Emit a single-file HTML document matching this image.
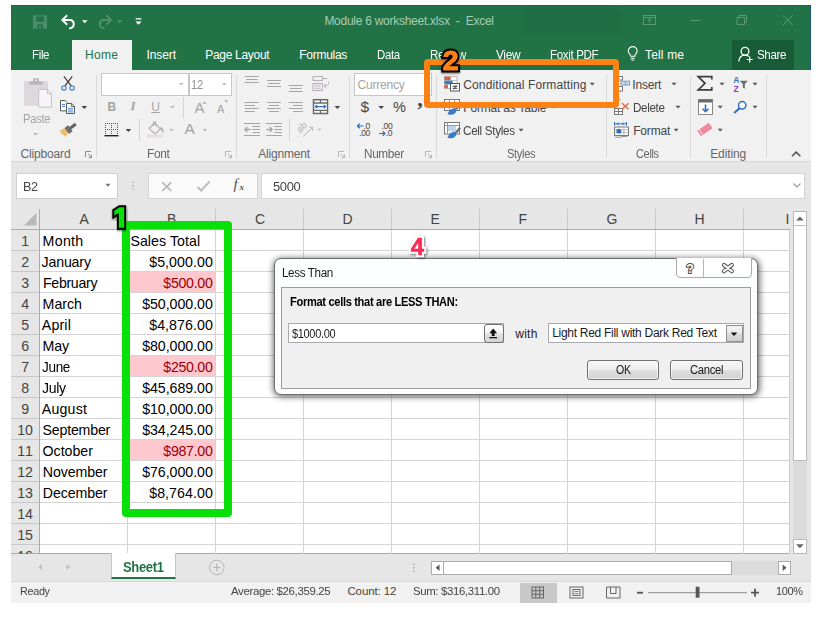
<!DOCTYPE html>
<html lang="en">
<head>
<meta charset="utf-8">
<title>Module 6 worksheet.xlsx - Excel</title>
<style>
html,body{margin:0;padding:0;background:#fff;}
body{width:838px;height:619px;position:relative;overflow:hidden;font-family:"Liberation Sans",sans-serif;}
.a{position:absolute;box-sizing:border-box;}
.t{position:absolute;white-space:nowrap;line-height:1;margin:0;padding:0;}
#titlebar{left:11px;top:5px;width:800px;height:65px;background:#217346;}
#hometab{left:72px;top:40px;width:60px;height:31px;background:#f1f1f1;}
#sharebg{left:732px;top:40px;width:62px;height:30px;background:#185c37;}
#ribbon{left:11px;top:70px;width:800px;height:92px;background:#f1f1f1;border-bottom:1px solid #d6d6d6;}
#fbar{left:11px;top:162px;width:800px;height:47px;background:#e6e6e6;}
#sheet{left:11px;top:209px;width:800px;height:345px;background:#e6e6e6;}
#grid{left:40px;top:230px;width:750px;height:324px;background:#fff;}
#tabbar{left:11px;top:554px;width:800px;height:28px;background:#e6e6e6;}
#status{left:11px;top:581px;width:800px;height:22px;background:#f1f1f1;border-top:1px solid #d9d9d9;}
.box{background:#fff;border:1px solid #c6c6c6;}
.num{font-weight:bold;}
.num::after{position:absolute;left:0;top:0;}
#n2{left:442.700px;top:46.300px;font-size:28.500px;-webkit-text-stroke:5px #000;color:#000;filter:drop-shadow(0 1px 1.200px rgba(0,0,0,.55));}
#n2::after{content:"2";-webkit-text-stroke:1px #fd8114;color:#fd8114;}
#n1{left:113.280px;top:204.190px;font-size:27.300px;-webkit-text-stroke:5.600px #000;color:#000;filter:drop-shadow(0.500px 1px 1.200px rgba(0,0,0,.55));clip-path:polygon(-6px -6px,26px -6px,26px 16.810px,12.920px 16.810px,12.920px 29px,3.570px 29px,3.570px 16.810px,-6px 16.810px);}
#n1::after{content:"1";-webkit-text-stroke:1.600px #08e008;color:#08e008;clip-path:polygon(-6px -6px,26px -6px,26px 18.810px,10.920px 18.810px,10.920px 30px,5.570px 30px,5.570px 18.810px,-6px 18.810px);}
#n4{left:410.700px;top:235.100px;font-size:24px;-webkit-text-stroke:4.500px #fff;color:#fff;filter:drop-shadow(1.500px 1.500px 1.300px rgba(0,0,0,.5));}
#n4::after{content:"4";-webkit-text-stroke:0.600px #fb2b55;color:#fb2b55;}
.vsep{width:1px;background:#d4d4d4;}
.gsep{width:1px;background:#dadada;top:75px;height:83px;}
.hl{height:1px;background:#d4d4d4;left:40px;width:750px;}
.vl{width:1px;background:#d4d4d4;top:230px;height:324px;}
.rh{height:1px;background:#c8c8c8;left:11px;width:28px;}
.ch{width:1px;background:#c8c8c8;top:209px;height:20px;}
.pink{background:#ffc7ce;left:128px;width:87px;height:20px;}
</style>
</head>
<body>
<div class="a" id="titlebar"></div>
<div class="a" style="left:524px;top:8px;width:98px;height:27px;background:rgba(0,0,0,.035);filter:blur(2.500px);"></div>
<div class="a" style="left:810px;top:5px;width:1px;height:65px;background:#1d5379;"></div>
<div class="a" style="left:11px;top:5px;width:799px;height:1px;background:#1c6b3f;"></div>
<div class="a" id="hometab"></div>
<div class="a" id="sharebg"></div>
<div class="a" id="ribbon"></div>
<div class="a" id="fbar"></div>
<div class="a" id="sheet"></div>
<div class="a" id="grid"></div>
<div class="a" id="tabbar"></div>
<div class="a" style="left:11px;top:553px;width:779px;height:1px;background:#ababab;"></div>
<div class="a" id="status"></div>
<div class="a gsep" style="left:96px"></div>
<div class="a gsep" style="left:236px"></div>
<div class="a gsep" style="left:349px"></div>
<div class="a gsep" style="left:436px"></div>
<div class="a gsep" style="left:606px"></div>
<div class="a gsep" style="left:690px"></div>
<div class="a gsep" style="left:766px"></div>
<div class="a box" style="left:101px;top:73px;width:88px;height:23px;"></div>
<div class="a box" style="left:189px;top:73px;width:43px;height:23px;border-left:1px solid #c6c6c6;"></div>
<div class="a box" style="left:354px;top:73px;width:78px;height:23px;"></div>
<div class="a vsep" style="left:183px;top:97px;width:1px;height:21px;"></div>
<div class="a vsep" style="left:139px;top:119px;width:1px;height:22px;"></div>
<div class="a vsep" style="left:289px;top:119px;width:1px;height:22px;"></div>
<div class="a box" style="left:16px;top:173px;width:102px;height:26px;border-color:#cfcfcf;"></div>
<div class="a box" style="left:148px;top:173px;width:110px;height:26px;border-color:#d4d4d4;background:#fafafa;"></div>
<div class="a box" style="left:261px;top:173px;width:544px;height:26px;border-color:#d4d4d4;"></div>
<div class="a" style="left:11px;top:229px;width:779px;height:1px;background:#ababab;"></div>
<div class="a" style="left:39px;top:209px;width:1px;height:345px;background:#ababab;"></div>
<div class="a ch" style="left:127px"></div>
<div class="a vl" style="left:127px"></div>
<div class="a ch" style="left:215px"></div>
<div class="a vl" style="left:215px"></div>
<div class="a ch" style="left:303px"></div>
<div class="a vl" style="left:303px"></div>
<div class="a ch" style="left:391px"></div>
<div class="a vl" style="left:391px"></div>
<div class="a ch" style="left:479px"></div>
<div class="a vl" style="left:479px"></div>
<div class="a ch" style="left:567px"></div>
<div class="a vl" style="left:567px"></div>
<div class="a ch" style="left:655px"></div>
<div class="a vl" style="left:655px"></div>
<div class="a ch" style="left:743px"></div>
<div class="a vl" style="left:743px"></div>
<div class="a hl" style="top:250px"></div>
<div class="a rh" style="top:250px"></div>
<div class="a hl" style="top:271px"></div>
<div class="a rh" style="top:271px"></div>
<div class="a hl" style="top:292px"></div>
<div class="a rh" style="top:292px"></div>
<div class="a hl" style="top:313px"></div>
<div class="a rh" style="top:313px"></div>
<div class="a hl" style="top:334px"></div>
<div class="a rh" style="top:334px"></div>
<div class="a hl" style="top:355px"></div>
<div class="a rh" style="top:355px"></div>
<div class="a hl" style="top:376px"></div>
<div class="a rh" style="top:376px"></div>
<div class="a hl" style="top:397px"></div>
<div class="a rh" style="top:397px"></div>
<div class="a hl" style="top:418px"></div>
<div class="a rh" style="top:418px"></div>
<div class="a hl" style="top:439px"></div>
<div class="a rh" style="top:439px"></div>
<div class="a hl" style="top:460px"></div>
<div class="a rh" style="top:460px"></div>
<div class="a hl" style="top:481px"></div>
<div class="a rh" style="top:481px"></div>
<div class="a hl" style="top:502px"></div>
<div class="a rh" style="top:502px"></div>
<div class="a hl" style="top:523px"></div>
<div class="a rh" style="top:523px"></div>
<div class="a hl" style="top:544px"></div>
<div class="a rh" style="top:544px"></div>
<div class="a pink" style="top:272px"></div>
<div class="a pink" style="top:356px"></div>
<div class="a pink" style="top:440px"></div>
<div class="a" style="left:789px;top:230px;width:1px;height:324px;background:#c9c9c9;"></div>
<div class="a box" style="left:792.5px;top:211px;width:14.5px;height:14.5px;border-color:#b9b9b9;"></div>
<div class="a box" style="left:792.5px;top:225.5px;width:14.5px;height:235.5px;border-color:#b9b9b9;border-top:none;"></div>
<div class="a" style="left:792.5px;top:461px;width:14.5px;height:78px;background:#dbdbdb;"></div>
<div class="a box" style="left:792.5px;top:539px;width:14.5px;height:14.5px;border-color:#b9b9b9;"></div>
<div class="a" style="left:111px;top:553px;width:65px;height:26px;background:#fff;border-bottom:2px solid #217346;border-left:1px solid #c6c6c6;border-right:1px solid #c6c6c6;"></div>
<div class="a" style="left:430.5px;top:561px;width:360.5px;height:14px;background:#dcdcdc;"></div>
<div class="a box" style="left:430.5px;top:561px;width:13.5px;height:14px;border-color:#ababab;"></div>
<div class="a box" style="left:444px;top:561px;width:288px;height:14px;border-color:#ababab;border-left:none;"></div>
<div class="a box" style="left:777.5px;top:561px;width:13.5px;height:14px;border-color:#ababab;"></div>
<div class="a" style="left:519.5px;top:583px;width:37.0px;height:20px;background:#c8c8c8;"></div>
<!-- Less Than dialog -->
<div class="a" style="left:274px;top:258.400px;width:483.500px;height:137px;background:#fcfdfe;border:1px solid #6f6f6f;border-radius:7px;box-shadow:0.500px 1px 7px rgba(0,0,0,.7);"></div>
<div class="a" style="left:676.400px;top:258.400px;width:75.200px;height:19.200px;background:#fff;border:1px solid #a9a9a9;border-top:none;border-radius:0 0 4.500px 4.500px;"></div>
<div class="a" style="left:703.300px;top:259px;width:1px;height:18px;background:#b5b5b5;"></div>
<div class="a" style="left:281.200px;top:287px;width:470px;height:101.500px;background:#f0f0f0;border:1px solid #9d9d9d;"></div>
<div class="a" style="left:288.200px;top:323.200px;width:216.200px;height:20.300px;background:#fff;border:1px solid #a7a9ae;"></div>
<div class="a" style="left:483.700px;top:323.800px;width:20.400px;height:19.200px;border:1px solid #6e6e6e;border-radius:3px;background:linear-gradient(#ffffff,#f3f3f3 48%,#e2e2e2 52%,#d6d6d6);"></div>
<div class="a" style="left:547.900px;top:323.200px;width:196.600px;height:20.300px;background:#fff;border:1px solid #a7a9ae;"></div>
<div class="a" style="left:726px;top:324.800px;width:16.500px;height:17px;border:1px solid #8d8d8d;background:linear-gradient(#f4f4f4,#e9e9e9 48%,#dadada 52%,#cfcfcf);"></div>
<div class="a" style="left:586.800px;top:359.800px;width:72.500px;height:20.700px;border:1px solid #707070;border-radius:3px;background:linear-gradient(#f6f6f6,#ededed 48%,#dedede 52%,#d2d2d2);box-shadow:inset 0 0 0 1px rgba(255,255,255,.7);"></div>
<div class="a" style="left:670.400px;top:359.800px;width:72.800px;height:20.700px;border:1px solid #707070;border-radius:3px;background:linear-gradient(#f6f6f6,#ededed 48%,#dedede 52%,#d2d2d2);box-shadow:inset 0 0 0 1px rgba(255,255,255,.7);"></div>
<svg class="a" style="left:0;top:0" width="838" height="619" viewBox="0 0 838 619">
<!-- quick access toolbar -->
<g>
 <rect x="33" y="15.400" width="14" height="13.200" fill="#4a8d6a"/>
 <rect x="36.300" y="16.600" width="7.600" height="5.200" fill="#217346"/>
 <rect x="37.300" y="24.300" width="5.600" height="4.300" fill="#217346"/>
 <rect x="39.300" y="26.200" width="1.500" height="2.400" fill="#4a8d6a"/>
</g>
<path d="M67.2 15.2L62.3 20l4.9 4.8M62.6 20h8.2a4.3 4.3 0 0 1 0 8.2h-1.6" fill="none" stroke="#fff" stroke-width="1.9" stroke-linejoin="miter"/>
<path d="M82 20.3h5.6l-2.8 2.9z" fill="#fff"/>
<path d="M106.3 15.2l4.9 4.8-4.9 4.8M110.9 20h-8.2a4.3 4.3 0 0 0 0 8.2h1.6" fill="none" stroke="#4e906d" stroke-width="1.9"/>
<path d="M117 20.3h5.6l-2.8 2.9z" fill="#4e906d"/>
<path d="M135.6 18.3h5.8v1.3h-5.8zM135.4 21.4h6.2l-3.1 3.3z" fill="#fff"/>
<!-- window controls -->
<g fill="none" stroke="#5a9877" stroke-width="1">
 <rect x="643.5" y="15.5" width="12" height="9"/>
 <path d="M643.5 17.5h12M649.5 23v-4M647.5 20.7l2-2 2 2"/>
 <path d="M690.5 20.5h10"/>
 <path d="M737 17.5h7.5v7H737zM739 17.5v-2h7.5v7h-2"/>
 <path d="M783 15.5l9.5 9.5M792.500 15.5l-9.500 9.500"/>
</g>
<!-- tell me bulb -->
<g fill="none" stroke="#fff" stroke-width="1.1">
 <path d="M630.700 56.200c0-1.600-2.400-2.600-2.400-5.200a4.400 4.400 0 0 1 8.800 0c0 2.600-2.400 3.600-2.400 5.200z"/>
 <path d="M630.800 58.200h3.900M631.300 60h2.900"/>
</g>
<!-- share person -->
<g fill="none" stroke="#fff" stroke-width="1.3">
 <circle cx="745" cy="51.300" r="3.900"/>
 <path d="M738.800 61.500c0.300-4 3-6.300 6.200-6.300 1.500 0 2.800 0.400 3.900 1.300"/>
 <path d="M749.700 56.500v6M746.700 59.500h6" stroke-width="1.200"/>
</g>
<!-- ===== Clipboard group ===== -->
<rect x="24" y="81" width="24" height="24.700" rx="1" fill="#dcd8dc"/>
<path d="M29.100 84.800v-3.200h4v-3.400h5.700v3.400h4v3.200z" fill="#b8b4b8"/>
<rect x="35" y="79.500" width="1.900" height="1.500" fill="#f1f1f1"/>
<path d="M38.700 89.500h8.600l4.200 4.200v13.500h-12.800z" fill="#f7f3f9" stroke="#c4c0c4" stroke-width="1"/>
<path d="M47.300 89.500v4.200h4.200" fill="none" stroke="#c4c0c4" stroke-width="1"/>
<path d="M33 133h5l-2.500 2.600z" fill="#b9b9b9"/>
<!-- scissors -->
<path d="M63.900 76.300l7.400 9.700M72.300 76.300l-7.400 9.700" stroke="#4a4a4a" stroke-width="1.300" fill="none"/>
<circle cx="63.900" cy="87.900" r="2.200" fill="none" stroke="#3b7bc6" stroke-width="1.100"/>
<circle cx="72" cy="87.900" r="2.200" fill="none" stroke="#3b7bc6" stroke-width="1.100"/>
<!-- copy -->
<path d="M60.500 100.500h4.600l2.400 2.400v8h-7z" fill="#fff" stroke="#5a5a5a"/>
<path d="M62 104.500h3M62 106.500h3" stroke="#3b7bc6" stroke-width="0.900"/>
<path d="M66.500 103.500h5.200l2.800 2.800v7.200h-8z" fill="#fff" stroke="#5a5a5a"/>
<path d="M71.400 103.700v2.800h2.900" fill="none" stroke="#5a5a5a" stroke-width="0.900"/>
<path d="M68 108.300h5M68 110.100h5M68 111.900h5" stroke="#3b7bc6" stroke-width="0.900"/>
<path d="M81.500 106h5.600l-2.800 2.900z" fill="#444"/>
<!-- format painter -->
<g transform="translate(68.300 129.800) rotate(-38)">
 <path d="M-1.800 -3.600l-6.200 -1l1.200 8.300l5 -0.900z" fill="#f0c069"/>
 <rect x="-1.800" y="-3.700" width="4.300" height="7.400" fill="#5f5f5f"/>
 <rect x="-0.300" y="-3.700" width="1" height="7.400" fill="#8a8a8a"/>
 <rect x="2.500" y="-1.500" width="7" height="3" fill="#5f5f5f"/>
</g>
<!-- dialog launchers -->
<g fill="none" stroke="#8a8a8a" stroke-width="1">
 <path d="M85.500 157v-5.500h5.500M88 154l3.500 3.500M91.500 154.700v3h-3"/>
 <path d="M225.500 157v-5.500h5.500M228 154l3.500 3.500M231.500 154.700v3h-3" stroke="#b5b5b5"/>
 <path d="M338.500 157v-5.500h5.500M341 154l3.500 3.500M344.500 154.700v3h-3" stroke="#b5b5b5"/>
 <path d="M425.500 157v-5.500h5.500M428 154l3.500 3.500M431.500 154.700v3h-3" stroke="#b5b5b5"/>
</g>
<!-- ===== Font group ===== -->
<path d="M179 83h4.600l-2.300 2.400z" fill="#b9b9b9"/>
<path d="M222 83h4.600l-2.300 2.400z" fill="#b9b9b9"/>
<path d="M170 106h4.600l-2.300 2.400z" fill="#b9b9b9"/>
<path d="M202.400 103.800h4.200l-2.100-2.400z" fill="#b0b0b0"/>
<path d="M224.200 100.300h4.200l-2.100 2.400z" fill="#b0b0b0"/>
<!-- borders -->
<g stroke="#555" stroke-width="1" fill="none">
 <path d="M105 123.500h13M105 129.500h13" stroke-dasharray="1 1"/>
 <path d="M105.500 123v12M111.500 123v12M117.500 123v12" stroke-dasharray="1 1"/>
 <path d="M104.500 135.700h14" stroke="#222" stroke-width="1.400"/>
</g>
<path d="M125.600 129h5.600l-2.800 2.900z" fill="#444"/>
<!-- fill bucket (disabled) -->
<g fill="none" stroke="#b4adb4" stroke-width="1.100">
 <path d="M149 128.500l5.500-5.500l6 6l-5.500 5z"/>
 <path d="M153.500 126v-4h2.200v4"/>
 <path d="M160.500 127.500c1.800 1 2.500 2.800 2.300 5" stroke-width="1.600"/>
</g>
<rect x="147" y="134.600" width="15.400" height="2.800" fill="#e4dde4"/>
<path d="M169.200 129h4.600l-2.300 2.400z" fill="#b9b9b9"/>
<path d="M202.600 129h4.600l-2.300 2.400z" fill="#b9b9b9"/>
<!-- ===== Alignment group ===== -->
<g stroke="#a6a6a6" stroke-width="1" fill="none">
 <path d="M244.600 76.500h14.200M246 79.500h11.600M244.600 82.500h14.200"/>
 <path d="M267 80.500h14M268.300 83.500h11.400M267 86.500h14"/>
 <path d="M288.800 85.500h14M290.100 88.500h11.400M288.800 91.500h14"/>
 <path d="M244.600 102.500h14.200M244.600 105.500h10.200M244.600 108.500h14.200M244.600 111.500h10.200"/>
 <path d="M267 102.500h14M269 105.500h10M267 108.500h14M269 111.500h10"/>
 <path d="M288.800 102.500h14M293 105.500h9.800M288.800 108.500h14M293 111.500h9.800"/>
 <path d="M244 123.500h16M244 135.500h16M252.300 126.500h7.700M252.300 129.500h7.700M252.300 132.500h7.700"/>
 <path d="M266 123.500h16M266 135.500h16M274.300 126.500h7.700M274.300 129.500h7.700M274.300 132.500h7.700"/>
 <path d="M244.800 129.500h5.800M247.300 127l-2.500 2.500l2.500 2.500" stroke-width="1.300"/>
 <path d="M266.400 129.500h5.800M269.700 127l2.500 2.500l-2.500 2.500" stroke-width="1.300"/>
 <path d="M303.300 136.500l9-9M309 127.200h3.500v3.500" stroke="#b4b4b4"/>
</g>
<path d="M317 128.700h4.600l-2.300 2.400z" fill="#c4c4c4"/>
<!-- wrap text -->
<g stroke="#b7aeb7" stroke-width="1" fill="none">
 <rect x="313" y="76.500" width="9.500" height="4"/><path d="M322.500 78.500h5"/>
 <rect x="313" y="83.500" width="9.500" height="7" fill="#f6f1f6"/>
 <path d="M314.800 85.800h6M314.800 88.200h6"/>
 <path d="M328.500 81.500c0.500 3-1 4.500-4.500 4.500M325.800 84l-1.900 2l2 1.900"/>
</g>
<!-- merge & center -->
<rect x="313.500" y="99.700" width="14" height="13.800" fill="#fff" stroke="#6b6b6b" stroke-width="1.500"/>
<path d="M313.500 103h14M313.500 110.300h14M320.500 99.700v3.300M320.500 110.300v3.200" stroke="#6b6b6b" stroke-width="1.300" fill="none"/>
<path d="M315.500 106.600h10M317.300 104.800l-1.900 1.800l1.900 1.800M323.700 104.800l1.900 1.800l-1.900 1.800" stroke="#2f6fbd" stroke-width="1.100" fill="none"/>
<path d="M334.600 106h5.600l-2.800 2.900z" fill="#444"/>
<!-- ===== Number group ===== -->
<path d="M378.400 106h5.600l-2.800 2.900z" fill="#444"/>
<path d="M357.400 126h6M359.800 123.700l-2.400 2.300l2.400 2.300" stroke="#2f6fbd" stroke-width="1.200" fill="none"/>
<path d="M379 133.500h6M382.600 131.200l2.400 2.300l-2.400 2.300" stroke="#2f6fbd" stroke-width="1.200" fill="none"/>
<!-- orientation ab -->
<text x="0" y="0" transform="translate(300.200 133.300) rotate(-45)" font-family="Liberation Sans, sans-serif" font-size="9.500" fill="#b0b0b0">ab</text>
<!-- decimals -->
<g font-family="Liberation Sans, sans-serif" font-size="8.500" fill="#444" letter-spacing="-0.400">
 <text x="363.600" y="129">.0</text><text x="359.300" y="135.500">.00</text>
 <text x="381.600" y="129">.00</text><text x="385.700" y="135.500">.0</text>
</g>
<!-- ===== Styles group ===== -->
<!-- conditional formatting -->
<rect x="444.500" y="76.500" width="12.500" height="12" fill="#fff" stroke="#b9b9b9"/>
<path d="M450.700 76.500v12M444.500 80.500h12.500M444.500 84.500h12.500" stroke="#c4c4c4" fill="none"/>
<rect x="444.500" y="76.700" width="6" height="3.300" fill="#dc5c3c"/>
<rect x="444.500" y="80.700" width="8" height="3.300" fill="#3b7bc6"/>
<rect x="444.500" y="84.700" width="3.400" height="3.500" fill="#dc5c3c"/>
<rect x="450.500" y="83.500" width="9" height="7.500" fill="#fff" stroke="#555"/>
<path d="M452.700 86.300h4.600M452.700 88.300h4.600M456.300 85.200l-2.400 4.200" stroke="#333" stroke-width="0.900" fill="none"/>
<!-- format as table -->
<rect x="444.500" y="99.500" width="15" height="11" fill="#fff" stroke="#777"/>
<path d="M444.500 103h15M449.500 99.500v11M454.500 99.500v11" stroke="#999" fill="none"/>
<path d="M447.500 114.500c1-4 3.500-6.300 8-6.300c1.300 1.500 1.200 3.500-0.500 5c-2 1.600-4.500 1.600-7.500 1.300z" fill="#3b7bc6"/>
<path d="M455.500 108.200l3.800-3.600l1.200 1.800l-3.700 3.600z" fill="#6b6b6b"/>
<!-- cell styles -->
<rect x="444.500" y="122.500" width="15" height="11.500" fill="#fff" stroke="#777"/>
<path d="M444.500 125.500h15M447.500 122.500v11.500" stroke="#999" fill="none"/>
<rect x="448" y="126" width="8" height="5.500" fill="#bdd4ec"/>
<path d="M447.500 138c1-4 3.500-6.300 8-6.300c1.300 1.500 1.200 3.500-0.500 5c-2 1.600-4.500 1.600-7.500 1.300z" fill="#3b7bc6"/>
<path d="M455.400 131.600l4-4.600l1.500 1.600l-4 4.800z" fill="#6b6b6b"/>
<path d="M589.700 82.800h5l-2.500 2.600z" fill="#555"/>
<path d="M550 105.800h5l-2.500 2.600z" fill="#555"/>
<path d="M518.600 128.800h5l-2.500 2.600z" fill="#555"/>
<!-- ===== Cells group ===== -->
<g fill="#fff" stroke="#777" stroke-width="1">
 <rect x="614.500" y="76.500" width="8" height="3.500"/>
 <rect x="614.500" y="86.500" width="8" height="4.500"/>
 <path d="M614.500 80v6.500M618.500 86.500v4.500"/>
</g>
<rect x="621" y="81.200" width="8.500" height="3.800" fill="#c5daef" stroke="#7d9cc0"/>
<path d="M625.300 81.200v3.800" stroke="#7d9cc0"/>
<g fill="#fff" stroke="#777" stroke-width="1">
 <rect x="614.500" y="108.500" width="8" height="6"/>
 <path d="M614.500 111.500h8M618.500 108.500v6M614.500 108.500v-8.500h6"/>
</g>
<path d="M622 103.300l6.500 6M628.500 103.300l-6.500 6" stroke="#e0694a" stroke-width="1.500" fill="none"/>
<path d="M614.500 123.800h12M614.500 122v3.600M626.500 122v3.600M618 122.600v2.400M623 122.600v2.400" stroke="#2f6fbd" stroke-width="1" fill="none"/>
<rect x="614.500" y="127" width="14" height="8.500" fill="#fff" stroke="#777"/>
<path d="M614.500 130h14M614.500 132.700h14M619.200 127v8.500M623.900 127v8.500" stroke="#aaa" stroke-width="0.800" fill="none"/>
<rect x="616.500" y="129.200" width="4.700" height="4" fill="#2f6fbd"/>
<path d="M615 137.200h6l1 -0.700h5.500" stroke="#888" stroke-width="0.900" fill="none"/>
<path d="M671.500 82.800h5l-2.500 2.600z" fill="#555"/>
<path d="M675.500 105.800h5l-2.500 2.600z" fill="#555"/>
<path d="M673.600 128.800h5l-2.500 2.600z" fill="#555"/>
<!-- ===== Editing group ===== -->
<path d="M711.800 79.500v-2.800h-13.600l6.800 6.600l-6.800 6.600h13.600v-2.800" fill="none" stroke="#3d3d3d" stroke-width="1.700" stroke-linejoin="miter"/>
<path d="M719.500 82.800h5l-2.500 2.600z" fill="#555"/>
<rect x="698.500" y="99.500" width="14" height="15" fill="#fff" stroke="#8a8a8a"/>
<rect x="698.500" y="99.500" width="14" height="3" fill="#6b6b6b"/>
<path d="M705.500 104.500v7M702.500 108.700l3 3l3 -3" stroke="#2f6fbd" stroke-width="1.600" fill="none"/>
<path d="M717.700 105.800h5l-2.500 2.600z" fill="#555"/>
<g transform="translate(705.300 129.200) rotate(-35)">
 <rect x="-5" y="-3.300" width="11.500" height="6.600" rx="0.800" fill="#ee8a9c"/>
 <rect x="-7.600" y="-3.300" width="2" height="6.600" fill="#ee8a9c"/>
</g>
<path d="M717.700 128.800h5l-2.500 2.600z" fill="#555"/>
<!-- sort & filter -->
<g font-family="Liberation Sans, sans-serif" font-weight="bold" font-size="8.500">
 <text x="733.200" y="83.300" fill="#2f6fbd">A</text>
 <text x="733.500" y="91.800" fill="#8a3fae">Z</text>
</g>
<path d="M739.800 80.800h8l-3 3.300v4.700l-2 -1.400v-3.300z" fill="#6b6b6b"/>
<path d="M752.500 82.800h5l-2.500 2.600z" fill="#555"/>
<!-- find -->
<circle cx="742.200" cy="105.300" r="3.700" fill="#fff" stroke="#2f6fbd" stroke-width="1.500"/>
<path d="M739.500 108.200l-5.300 4.800" stroke="#2f6fbd" stroke-width="2.200" fill="none"/>
<path d="M752.500 105.800h5l-2.500 2.600z" fill="#555"/>
<!-- collapse ribbon -->
<path d="M792 156.300l4.200 -4.200l4.200 4.200" stroke="#555" stroke-width="1.500" fill="none"/>
<!-- ===== formula bar ===== -->
<path d="M105.200 183.800h5.400l-2.700 3z" fill="#777"/>
<path d="M133 181.500v1.500M133 185v1.500M133 188.500v1.500" stroke="#aaa" stroke-width="1.200"/>
<path d="M162.300 182.300l8.900 8.600M171.200 182.300l-8.900 8.600" stroke="#b9b9b9" stroke-width="1.700" fill="none"/>
<path d="M197.300 186.800l3.800 3.700l8.600 -9" stroke="#bdbdbd" stroke-width="2" fill="none"/>
<path d="M793.500 183.500l3.500 3.500l3.500 -3.500" stroke="#9a9a9a" stroke-width="1.200" fill="none"/>
<!-- select all triangle -->
<path d="M36.500 213v12.500h-12.500z" fill="#b9b9b9"/>
<!-- v scroll arrows -->
<path d="M796 220.500h7.800l-3.900 -4.100z" fill="#666"/>
<path d="M796 544.200h7.800l-3.900 4.100z" fill="#666"/>
<!-- h scroll arrows -->
<path d="M439.500 564.500v6.600l-3.800 -3.300z" fill="#555"/>
<path d="M782.700 564.500v6.600l3.800 -3.300z" fill="#555"/>
<path d="M413.800 563.500v1.600M413.800 567v1.600M413.800 570.500v1.600" stroke="#999" stroke-width="1.200"/>
<!-- sheet nav -->
<path d="M42 563.700v6.600l-3.600 -3.300z" fill="#c2c2c2"/>
<path d="M66.500 563.700v6.600l3.600 -3.300z" fill="#c2c2c2"/>
<circle cx="216.800" cy="567.500" r="7.300" fill="none" stroke="#b5b5b5" stroke-width="1"/>
<path d="M213 567.500h7.600M216.800 563.700v7.600" stroke="#b5b5b5" stroke-width="1.200"/>
<!-- status view buttons -->
<g fill="none" stroke="#666" stroke-width="1">
 <rect x="532" y="587" width="11.500" height="11"/>
 <path d="M532 590.700h11.500M532 594.300h11.500M535.800 587v11M539.700 587v11"/>
 <rect x="570" y="587" width="13" height="11"/>
 <rect x="573" y="589.500" width="7" height="6"/>
 <path d="M574.500 591.500h4M574.500 593.500h4" stroke-width="0.800"/>
 <path d="M606.500 598v-11h13.500v11zM610.500 587v6.500h5.500v-6.500"/>
</g>
<path d="M637 592.700h6" stroke="#555" stroke-width="1.800"/>
<path d="M648 592.700h99" stroke="#8a8a8a" stroke-width="1"/>
<rect x="695.700" y="586.700" width="3.800" height="11" fill="#555"/>
<path d="M751 592.700h8M755 588.700v8" stroke="#555" stroke-width="1.800"/>
<!-- dialog icons -->
<path d="M489.300 333.300l3.900 -4.800l3.900 4.800h-2.500v2.800h-2.800v-2.800z" fill="#111"/>
<rect x="489.300" y="337" width="7.800" height="1.300" fill="#111"/>
<path d="M730.700 332.500h6.600l-3.300 3.600z" fill="#111"/>
<text x="686.200" y="273" font-family="Liberation Sans, sans-serif" font-weight="bold" font-size="12.500" fill="#fff" stroke="#4a4a4a" stroke-width="1.900" paint-order="stroke">?</text>
<path d="M724 265l7.800 6.200M731.800 265l-7.800 6.200" stroke="#555" stroke-width="4.200" stroke-linecap="round" fill="none"/>
<path d="M724 265l7.800 6.200M731.800 265l-7.800 6.200" stroke="#fff" stroke-width="2.200" stroke-linecap="round" fill="none"/>
</svg>
<span class="t" style="left:324.4px;top:14.84px;font-size:12px;color:#a8ccb7;letter-spacing:-0.265px;white-space:pre;">Module 6 worksheet.xlsx  -  Excel</span>
<span class="t" style="left:31.5px;top:48.84px;font-size:12px;color:#fff;letter-spacing:-0.35px;transform:scaleX(0.9566);transform-origin:0 0;">File</span>
<span class="t" style="left:85px;top:48.84px;font-size:12px;color:#217346;letter-spacing:0.328px;">Home</span>
<span class="t" style="left:146.5px;top:48.84px;font-size:12px;color:#fff;letter-spacing:-0.103px;">Insert</span>
<span class="t" style="left:205.3px;top:48.84px;font-size:12px;color:#fff;letter-spacing:-0.309px;">Page Layout</span>
<span class="t" style="left:299.3px;top:48.84px;font-size:12px;color:#fff;letter-spacing:-0.288px;">Formulas</span>
<span class="t" style="left:377.4px;top:48.84px;font-size:12px;color:#fff;letter-spacing:-0.35px;transform:scaleX(0.9503);transform-origin:0 0;">Data</span>
<span class="t" style="left:430.4px;top:48.84px;font-size:12px;color:#fff;letter-spacing:-0.35px;transform:scaleX(0.9652);transform-origin:0 0;">Review</span>
<span class="t" style="left:495.5px;top:48.84px;font-size:12px;color:#fff;letter-spacing:-0.35px;transform:scaleX(0.99);transform-origin:0 0;">View</span>
<span class="t" style="left:550.4px;top:48.84px;font-size:12px;color:#fff;letter-spacing:-0.35px;transform:scaleX(0.9615);transform-origin:0 0;">Foxit PDF</span>
<span class="t" style="left:645px;top:48.84px;font-size:12px;color:#fff;letter-spacing:0.164px;">Tell me</span>
<span class="t" style="left:757.2px;top:48.84px;font-size:12px;color:#fff;letter-spacing:-0.35px;transform:scaleX(0.9631);transform-origin:0 0;">Share</span>
<span class="t" style="left:22.6px;top:112.84px;font-size:12px;color:#a3a3a3;letter-spacing:-0.35px;transform:scaleX(0.939);transform-origin:0 0;">Paste</span>
<span class="t" style="left:20.5px;top:147.54px;font-size:12px;color:#666;letter-spacing:-0.159px;">Clipboard</span>
<span class="t" style="left:146.7px;top:147.54px;font-size:12px;color:#666;letter-spacing:-0.35px;transform:scaleX(0.9971);transform-origin:0 0;">Font</span>
<span class="t" style="left:258.3px;top:147.54px;font-size:12px;color:#666;letter-spacing:-0.184px;">Alignment</span>
<span class="t" style="left:364.4px;top:147.54px;font-size:12px;color:#666;letter-spacing:-0.35px;transform:scaleX(0.9795);transform-origin:0 0;">Number</span>
<span class="t" style="left:507px;top:147.54px;font-size:12px;color:#666;letter-spacing:-0.35px;transform:scaleX(0.9212);transform-origin:0 0;">Styles</span>
<span class="t" style="left:635.9px;top:147.54px;font-size:12px;color:#666;letter-spacing:-0.35px;transform:scaleX(0.9141);transform-origin:0 0;">Cells</span>
<span class="t" style="left:710.2px;top:147.54px;font-size:12px;color:#666;letter-spacing:-0.117px;">Editing</span>
<span class="t" style="left:191.4px;top:78.84px;font-size:12px;color:#949494;letter-spacing:-0.35px;transform:scaleX(0.9378);transform-origin:0 0;">12</span>
<span class="t" style="left:357.6px;top:78.84px;font-size:12px;color:#a3a3a3;letter-spacing:-0.213px;">Currency</span>
<span class="t" style="left:463.3px;top:78.84px;font-size:12px;color:#444;letter-spacing:0.113px;">Conditional Formatting</span>
<span class="t" style="left:463.3px;top:101.84px;font-size:12px;color:#444;letter-spacing:-0.188px;">Format as Table</span>
<span class="t" style="left:463.3px;top:124.84px;font-size:12px;color:#444;letter-spacing:-0.35px;transform:scaleX(0.9777);transform-origin:0 0;">Cell Styles</span>
<span class="t" style="left:632.3px;top:78.84px;font-size:12px;color:#444;letter-spacing:-0.183px;">Insert</span>
<span class="t" style="left:633.2px;top:101.84px;font-size:12px;color:#444;letter-spacing:-0.35px;transform:scaleX(0.9715);transform-origin:0 0;">Delete</span>
<span class="t" style="left:633.2px;top:124.84px;font-size:12px;color:#444;letter-spacing:-0.183px;">Format</span>
<span class="t" style="left:107.6px;top:100.64px;font-size:12px;color:#a3a3a3;font-weight:bold;">B</span>
<span class="t" style="left:130.5px;top:99.21px;font-size:13px;color:#a3a3a3;font-style:italic;font-family:'Liberation Serif',serif;font-weight:bold;">I</span>
<span class="t" style="left:151.2px;top:100.64px;font-size:12px;color:#a3a3a3;text-decoration:underline;">U</span>
<span class="t" style="left:194.4px;top:100.3px;font-size:15px;color:#a3a3a3;">A</span>
<span class="t" style="left:217.1px;top:103.69px;font-size:11px;color:#a3a3a3;">A</span>
<span class="t" style="left:184.4px;top:121.48px;font-size:15.5px;color:#a3a3a3;">A</span>
<span class="t" style="left:360.5px;top:98.88px;font-size:15.5px;color:#444;">$</span>
<span class="t" style="left:393px;top:100.13px;font-size:14.5px;color:#444;">%</span>
<span class="t" style="left:417.3px;top:87.89px;font-size:22px;color:#444;font-weight:bold;font-family:'Liberation Serif',serif;">,</span>
<span class="t" style="left:23.4px;top:180.0px;font-size:13px;color:#444;letter-spacing:-0.35px;transform:scaleX(0.9642);transform-origin:0 0;">B2</span>
<span class="t" style="left:272.7px;top:179.6px;font-size:13px;color:#444;letter-spacing:-0.35px;transform:scaleX(0.9974);transform-origin:0 0;">5000</span>
<span class="t" style="left:233.5px;top:176.63px;font-size:15px;color:#555;font-style:italic;font-family:'Liberation Serif',serif;">f</span>
<span class="t" style="left:239.5px;top:182.98px;font-size:9px;color:#555;font-style:italic;font-weight:bold;font-family:'Liberation Serif',serif;">x</span>
<span class="t" style="left:122.8px;top:560.15px;font-size:14px;color:#217346;letter-spacing:-0.35px;transform:scaleX(0.9282);transform-origin:0 0;font-weight:bold;">Sheet1</span>
<span class="t" style="left:19.5px;top:585.77px;font-size:11.5px;color:#444;letter-spacing:-0.35px;transform:scaleX(0.9419);transform-origin:0 0;">Ready</span>
<span class="t" style="left:230.7px;top:585.77px;font-size:11.5px;color:#444;letter-spacing:-0.35px;transform:scaleX(0.9932);transform-origin:0 0;">Average: $26,359.25</span>
<span class="t" style="left:347.4px;top:585.77px;font-size:11.5px;color:#444;letter-spacing:-0.097px;">Count: 12</span>
<span class="t" style="left:413.3px;top:585.77px;font-size:11.5px;color:#444;letter-spacing:-0.35px;transform:scaleX(0.9899);transform-origin:0 0;">Sum: $316,311.00</span>
<span class="t" style="left:775.5px;top:585.77px;font-size:11.5px;color:#444;letter-spacing:-0.35px;transform:scaleX(0.9516);transform-origin:0 0;">100%</span>
<span class="t" style="left:79.4px;top:212.15px;font-size:14px;color:#444;">A</span>
<span class="t" style="left:254.9px;top:212.15px;font-size:14px;color:#444;">C</span>
<span class="t" style="left:342.4px;top:212.15px;font-size:14px;color:#444;">D</span>
<span class="t" style="left:430.4px;top:212.15px;font-size:14px;color:#444;">E</span>
<span class="t" style="left:518.4px;top:212.15px;font-size:14px;color:#444;">F</span>
<span class="t" style="left:606.4px;top:212.15px;font-size:14px;color:#444;">G</span>
<span class="t" style="left:694.4px;top:212.15px;font-size:14px;color:#444;">H</span>
<span class="t" style="left:167px;top:212.15px;font-size:14px;color:#444;">B</span>
<span class="t" style="left:785.5px;top:212.15px;font-size:14px;color:#444;">I</span>
<span class="t" style="left:21.3px;top:233.58px;font-size:14.2px;color:#444;">1</span>
<span class="t" style="left:21.3px;top:254.58px;font-size:14.2px;color:#444;">2</span>
<span class="t" style="left:21.3px;top:275.58px;font-size:14.2px;color:#444;">3</span>
<span class="t" style="left:21.3px;top:296.58px;font-size:14.2px;color:#444;">4</span>
<span class="t" style="left:21.3px;top:317.58px;font-size:14.2px;color:#444;">5</span>
<span class="t" style="left:21.3px;top:338.58px;font-size:14.2px;color:#444;">6</span>
<span class="t" style="left:21.3px;top:359.58px;font-size:14.2px;color:#444;">7</span>
<span class="t" style="left:21.3px;top:380.58px;font-size:14.2px;color:#444;">8</span>
<span class="t" style="left:21.3px;top:401.58px;font-size:14.2px;color:#444;">9</span>
<span class="t" style="left:17.3px;top:422.58px;font-size:14.2px;color:#444;letter-spacing:-0.281px;">10</span>
<span class="t" style="left:17.3px;top:443.58px;font-size:14.2px;color:#444;letter-spacing:0.766px;">11</span>
<span class="t" style="left:17.3px;top:464.58px;font-size:14.2px;color:#444;letter-spacing:-0.281px;">12</span>
<span class="t" style="left:17.3px;top:485.58px;font-size:14.2px;color:#444;letter-spacing:-0.281px;">13</span>
<span class="t" style="left:17.3px;top:506.58px;font-size:14.2px;color:#444;letter-spacing:-0.281px;">14</span>
<span class="t" style="left:17.3px;top:527.58px;font-size:14.2px;color:#444;letter-spacing:-0.281px;">15</span>
<span class="t" style="left:17.3px;top:548.58px;font-size:14.2px;color:#444;letter-spacing:-0.281px;clip-path:inset(0 0 8.800px 0);">16</span>
<span class="t" style="left:42.6px;top:233.58px;font-size:14.2px;color:#000;letter-spacing:0.291px;">Month</span>
<span class="t" style="left:130.4px;top:233.58px;font-size:14.2px;color:#000;letter-spacing:0.064px;">Sales Total</span>
<span class="t" style="left:41.5px;top:254.58px;font-size:14.2px;color:#000;letter-spacing:-0.164px;">January</span>
<span class="t" style="left:149.2px;top:254.58px;font-size:14.2px;color:#000;letter-spacing:0.059px;">$5,000.00</span>
<span class="t" style="left:43px;top:275.58px;font-size:14.2px;color:#000;letter-spacing:-0.326px;">February</span>
<span class="t" style="left:163.33px;top:275.58px;font-size:14.2px;color:#9c0006;letter-spacing:-0.305px;">$500.00</span>
<span class="t" style="left:42.6px;top:296.58px;font-size:14.2px;color:#000;letter-spacing:-0.03px;">March</span>
<span class="t" style="left:142.13px;top:296.58px;font-size:14.2px;color:#000;letter-spacing:-0.039px;">$50,000.00</span>
<span class="t" style="left:41.8px;top:317.58px;font-size:14.2px;color:#000;letter-spacing:0.152px;">April</span>
<span class="t" style="left:149.2px;top:317.58px;font-size:14.2px;color:#000;letter-spacing:0.059px;">$4,876.00</span>
<span class="t" style="left:42.6px;top:338.58px;font-size:14.2px;color:#000;letter-spacing:-0.106px;">May</span>
<span class="t" style="left:142.13px;top:338.58px;font-size:14.2px;color:#000;letter-spacing:-0.039px;">$80,000.00</span>
<span class="t" style="left:41.8px;top:359.58px;font-size:14.2px;color:#000;letter-spacing:-0.35px;transform:scaleX(0.9557);transform-origin:0 0;">June</span>
<span class="t" style="left:163.33px;top:359.58px;font-size:14.2px;color:#9c0006;letter-spacing:-0.305px;">$250.00</span>
<span class="t" style="left:41.8px;top:380.58px;font-size:14.2px;color:#000;letter-spacing:-0.35px;transform:scaleX(0.9924);transform-origin:0 0;">July</span>
<span class="t" style="left:142.13px;top:380.58px;font-size:14.2px;color:#000;letter-spacing:-0.039px;">$45,689.00</span>
<span class="t" style="left:41.8px;top:401.58px;font-size:14.2px;color:#000;letter-spacing:0.186px;">August</span>
<span class="t" style="left:142.13px;top:401.58px;font-size:14.2px;color:#000;letter-spacing:-0.039px;">$10,000.00</span>
<span class="t" style="left:42.6px;top:422.58px;font-size:14.2px;color:#000;letter-spacing:-0.213px;">September</span>
<span class="t" style="left:142.13px;top:422.58px;font-size:14.2px;color:#000;letter-spacing:-0.039px;">$34,245.00</span>
<span class="t" style="left:42.6px;top:443.58px;font-size:14.2px;color:#000;letter-spacing:-0.028px;">October</span>
<span class="t" style="left:163.33px;top:443.58px;font-size:14.2px;color:#9c0006;letter-spacing:-0.305px;">$987.00</span>
<span class="t" style="left:42.8px;top:464.58px;font-size:14.2px;color:#000;letter-spacing:-0.093px;">November</span>
<span class="t" style="left:142.13px;top:464.58px;font-size:14.2px;color:#000;letter-spacing:-0.039px;">$76,000.00</span>
<span class="t" style="left:42.8px;top:485.58px;font-size:14.2px;color:#000;letter-spacing:-0.093px;">December</span>
<span class="t" style="left:149.2px;top:485.58px;font-size:14.2px;color:#000;letter-spacing:0.059px;">$8,764.00</span>
<span class="t" style="left:282.2px;top:266.64px;font-size:12px;color:#1a1a1a;letter-spacing:-0.35px;transform:scaleX(0.9674);transform-origin:0 0;">Less Than</span>
<span class="t" style="left:289.6px;top:295.84px;font-size:12px;color:#000;letter-spacing:-0.35px;transform:scaleX(0.9248);transform-origin:0 0;font-weight:bold;">Format cells that are LESS THAN:</span>
<span class="t" style="left:292.4px;top:327.54px;font-size:12px;color:#1a1a1a;letter-spacing:-0.35px;transform:scaleX(0.9157);transform-origin:0 0;">$1000.00</span>
<span class="t" style="left:515.2px;top:327.54px;font-size:12px;color:#1a1a1a;letter-spacing:0.285px;">with</span>
<span class="t" style="left:552.2px;top:326.84px;font-size:12px;color:#1a1a1a;letter-spacing:-0.283px;">Light Red Fill with Dark Red Text</span>
<span class="t" style="left:615.9px;top:364.34px;font-size:12px;color:#1a1a1a;letter-spacing:-0.35px;transform:scaleX(0.8886);transform-origin:0 0;">OK</span>
<span class="t" style="left:690px;top:364.34px;font-size:12px;color:#1a1a1a;letter-spacing:-0.35px;transform:scaleX(0.938);transform-origin:0 0;">Cancel</span>
<!-- annotation overlays -->
<div class="a" style="left:424px;top:59px;width:195px;height:48.500px;border:6.500px solid #fd8114;border-radius:4px;"></div>
<div class="a" style="left:122px;top:220.700px;width:109.500px;height:296px;border:8.500px solid #08e008;border-radius:4px;"></div>
<span class="t num" id="n2">2</span>
<span class="t num" id="n1">1</span>
<span class="t num" id="n4">4</span>
</body>
</html>
